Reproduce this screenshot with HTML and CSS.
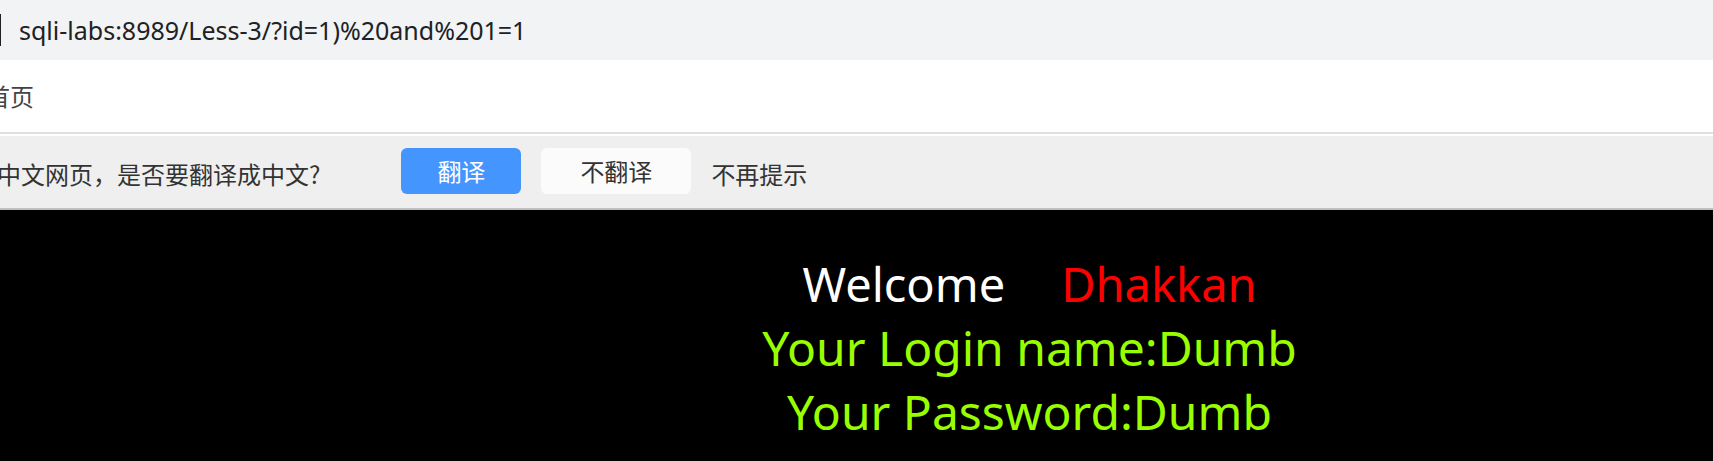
FILE: index.html
```html
<!DOCTYPE html>
<html lang="zh-CN">
<head>
<meta charset="utf-8">
<title>Less-3</title>
<link rel="stylesheet" href="styles.css">
</head>
<body>
<header class="address-bar">
  <span class="divider"></span>
  <input class="address" type="text" aria-label="地址" value="sqli-labs:8989/Less-3/?id=1)%20and%201=1">
</header>
<nav class="bookmarks"><a class="bookmark" href="#">首页</a></nav>
<section class="translate-bar">
  <p class="question">中文网页，是否要翻译成中文?</p>
  <div class="actions">
    <button class="btn btn-primary" type="button">翻译</button>
    <button class="btn btn-plain" type="button">不翻译</button>
    <button class="btn-text" type="button">不再提示</button>
  </div>
</section>
<main class="page">
  <p class="welcome"><span>Welcome</span><span class="name">Dhakkan</span></p>
  <p class="result">Your Login name:Dumb</p>
  <p class="result">Your Password:Dumb</p>
</main>
</body>
</html>
```

FILE: styles.css
```css
* { box-sizing: border-box; }

body {
  margin: 0;
  min-height: 100vh;
  display: flex;
  flex-direction: column;
  overflow-x: hidden;
  background: #000;
  color: #333;
  font: 24px/32px "Noto Sans CJK SC", sans-serif;
}

p { margin: 0; }

button, input { font: inherit; color: inherit; border: 0; padding: 0; }

.address-bar {
  display: flex;
  align-items: center;
  gap: 18px;
  height: 60px;
  background: #f1f3f4;
}

.divider { width: 1px; height: 32px; background: #202124; }

.address {
  flex: 1;
  min-width: 0;
  background: transparent;
  color: #202124;
  font-family: "Noto Sans", sans-serif;
  font-size: 25px;
  outline: none;
}

.bookmarks {
  display: flex;
  align-items: center;
  height: 74px;
  background: #fff;
  border-bottom: 2px solid #e0e0e0;
}

.bookmark {
  margin-left: -14px;
  color: #444;
  text-decoration: none;
}

.translate-bar {
  display: flex;
  gap: 81px;
  height: 76px;
  padding-top: 12px;
  background: #efefef;
  border-top: 2px solid #fff;
  border-bottom: 2px solid #bfbfbf;
}

.question { margin-left: -3px; padding-top: 10px; white-space: nowrap; }

.actions { display: flex; gap: 20px; align-items: flex-start; }

.btn { height: 46px; border-radius: 6px; }

.btn-primary { width: 120px; background: #4595ff; color: #fff; }

.btn-plain { width: 150px; background: #fbfbfb; }

.btn-text { padding-top: 10px; background: none; }

.page {
  flex: 1;
  padding: 42px 0 0 20.2%;
  font-family: "Noto Sans", sans-serif;
  font-size: 48px;
  line-height: 64px;
  text-align: center;
}

.welcome {
  display: flex;
  justify-content: center;
  gap: 56px;
  color: #fff;
  font-size: 47px;
}

.name { color: #f00; }

.result { color: #9f0; }
```
